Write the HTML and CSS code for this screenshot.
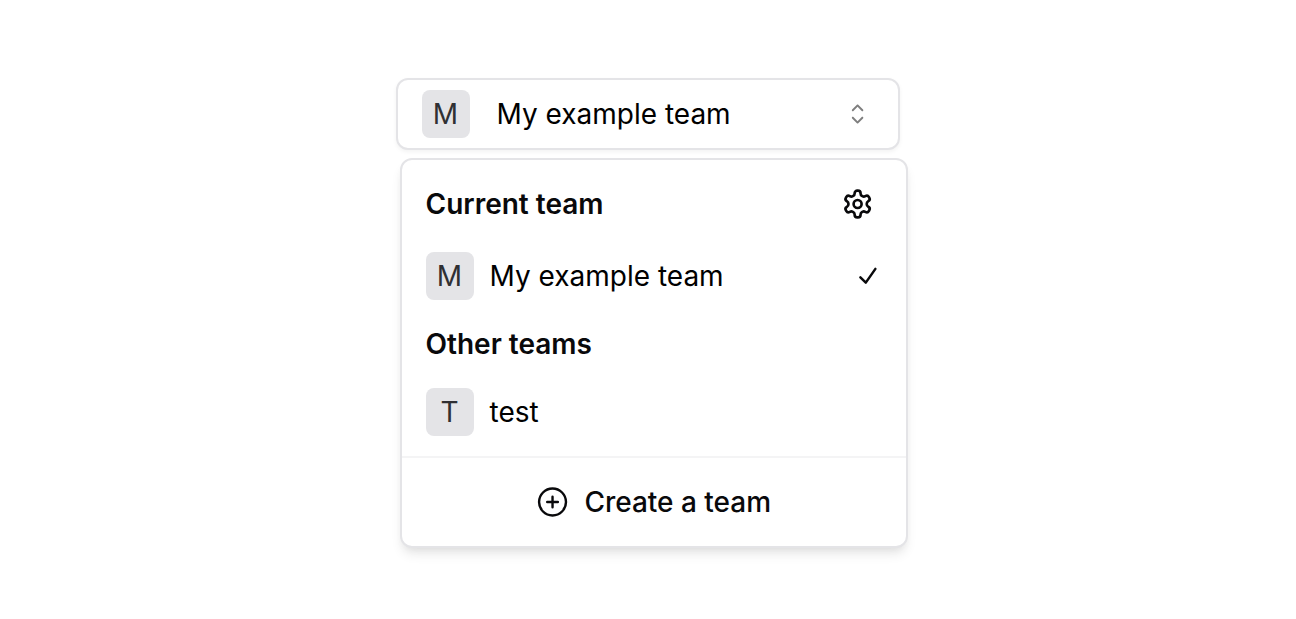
FILE: index.html
```html
<!DOCTYPE html>
<html lang="en">
<head>
<meta charset="utf-8">
<title>Team switcher</title>
<link rel="stylesheet" href="styles.css">
</head>
<body>
<main class="switcher">
  <button class="trigger" type="button">
    <span class="avatar">M</span>
    <span class="trigger-name">My example team</span>
    <svg class="icon-chevrons" viewBox="0.2 0 15 15" fill="#000"><path fill-rule="evenodd" clip-rule="evenodd" d="M4.93179 5.43179C4.75605 5.60753 4.75605 5.89245 4.93179 6.06819C5.10753 6.24392 5.39245 6.24392 5.56819 6.06819L7.49999 4.13638L9.43179 6.06819C9.60753 6.24392 9.89245 6.24392 10.0682 6.06819C10.2439 5.89245 10.2439 5.60753 10.0682 5.43179L7.81819 3.18179C7.73379 3.0974 7.61933 3.04999 7.49999 3.04999C7.38064 3.04999 7.26618 3.0974 7.18179 3.18179L4.93179 5.43179ZM10.0682 9.56819C10.2439 9.39245 10.2439 9.10753 10.0682 8.93179C9.89245 8.75606 9.60753 8.75606 9.43179 8.93179L7.49999 10.8636L5.56819 8.93179C5.39245 8.75606 5.10753 8.75606 4.93179 8.93179C4.75605 9.10753 4.75605 9.39245 4.93179 9.56819L7.18179 11.8182C7.35753 11.9939 7.64245 11.9939 7.81819 11.8182L10.0682 9.56819Z"/></svg>
  </button>
  <section class="menu">
    <div class="teams">
      <div class="heading">
        <span>Current team</span>
        <svg class="icon-gear" viewBox="0.3 0 24 24" fill="none" stroke="#09090b" stroke-width="2" stroke-linecap="round" stroke-linejoin="round"><path d="M12.22 2h-.44a2 2 0 0 0-2 2v.18a2 2 0 0 1-1 1.73l-.43.25a2 2 0 0 1-2 0l-.15-.08a2 2 0 0 0-2.73.73l-.22.38a2 2 0 0 0 .73 2.73l.15.1a2 2 0 0 1 1 1.72v.51a2 2 0 0 1-1 1.74l-.15.09a2 2 0 0 0-.73 2.73l.22.38a2 2 0 0 0 2.73.73l.15-.08a2 2 0 0 1 2 0l.43.25a2 2 0 0 1 1 1.73V20a2 2 0 0 0 2 2h.44a2 2 0 0 0 2-2v-.18a2 2 0 0 1 1-1.73l.43-.25a2 2 0 0 1 2 0l.15.08a2 2 0 0 0 2.73-.73l.22-.39a2 2 0 0 0-.73-2.73l-.15-.08a2 2 0 0 1-1-1.74v-.5a2 2 0 0 1 1-1.74l.15-.09a2 2 0 0 0 .73-2.73l-.22-.38a2 2 0 0 0-2.73-.73l-.15.08a2 2 0 0 1-2 0l-.43-.25a2 2 0 0 1-1-1.73V4a2 2 0 0 0-2-2z"/><circle cx="12" cy="12" r="3"/></svg>
      </div>
      <div class="team team-current">
        <span class="avatar">M</span>
        <span class="team-name">My example team</span>
        <svg class="icon-check" viewBox="0 0 32 32" fill="none" stroke="#09090b" stroke-width="2.5" stroke-linecap="round" stroke-linejoin="round"><path d="M8.4 17.4 13.8 22.6 23.4 8.9"/></svg>
      </div>
      <div class="heading heading-other">Other teams</div>
      <div class="team">
        <span class="avatar">T</span>
        <span class="team-name">test</span>
      </div>
    </div>
    <div class="create">
      <svg class="icon-plus" viewBox="-0.4 0 24 24" fill="none" stroke="#09090b" stroke-width="1.8" stroke-linecap="round"><circle cx="12" cy="12" r="10.1"/><path d="M8 12h8M12 8v8"/></svg>
      <span>Create a team</span>
    </div>
  </section>
</main>
</body>
</html>
```
FILE: styles.css
```css
* { box-sizing: border-box; }
body {
  margin: 0;
  min-height: 619px;
  padding: 78px 0 0 395.5px;
  background: #fff;
  color: #09090b;
  font: 400 28px/40px Inter, sans-serif;
}
svg { display: block; flex: none; }
.switcher { width: 512px; }
.trigger {
  display: flex;
  align-items: center;
  width: 504px;
  height: 72px;
  padding: 0 24px;
  border: 2px solid #e4e4e7;
  border-radius: 12px;
  background: #fff;
  box-shadow: 0 2px 4px rgba(0, 0, 0, 0.05);
  color: #000;
  font: inherit;
}
.avatar {
  display: flex;
  flex: none;
  align-items: center;
  justify-content: center;
  width: 48px;
  height: 48px;
  border-radius: 8px;
  background: #e4e4e7;
  color: #303033;
}
.trigger-name { margin-left: 27px; }
.team-name { color: #000; }
.icon-chevrons { width: 32px; height: 32px; margin-left: auto; opacity: 0.5; }
.menu {
  width: 507.5px;
  height: 390px;
  margin: 8px 0 0 4.5px;
  border: 2px solid #e4e4e7;
  border-radius: 12px;
  background: #fff;
  box-shadow: 0 8px 12px -2px rgba(0, 0, 0, 0.09), 0 4px 8px -4px rgba(0, 0, 0, 0.08);
}
.teams { height: 298px; padding: 24px 23px 24px 23.5px; border-bottom: 2px solid #f4f4f5; }
.heading {
  display: flex;
  align-items: center;
  justify-content: space-between;
  height: 40px;
  padding-right: 9px;
  font-weight: 600;
}
.icon-gear { width: 32px; height: 32px; }
.team { display: flex; align-items: center; gap: 16px; height: 48px; }
.team-current { margin-top: 28px; }
.icon-check { width: 32px; height: 32px; margin: 0 -1px 0 auto; }
.heading-other { margin-top: 24px; }
.heading-other + .team { margin-top: 24px; }
.create {
  display: flex;
  align-items: center;
  justify-content: center;
  gap: 16px;
  height: 88px;
  font-weight: 500;
}
.icon-plus { width: 32px; height: 32px; }
```
